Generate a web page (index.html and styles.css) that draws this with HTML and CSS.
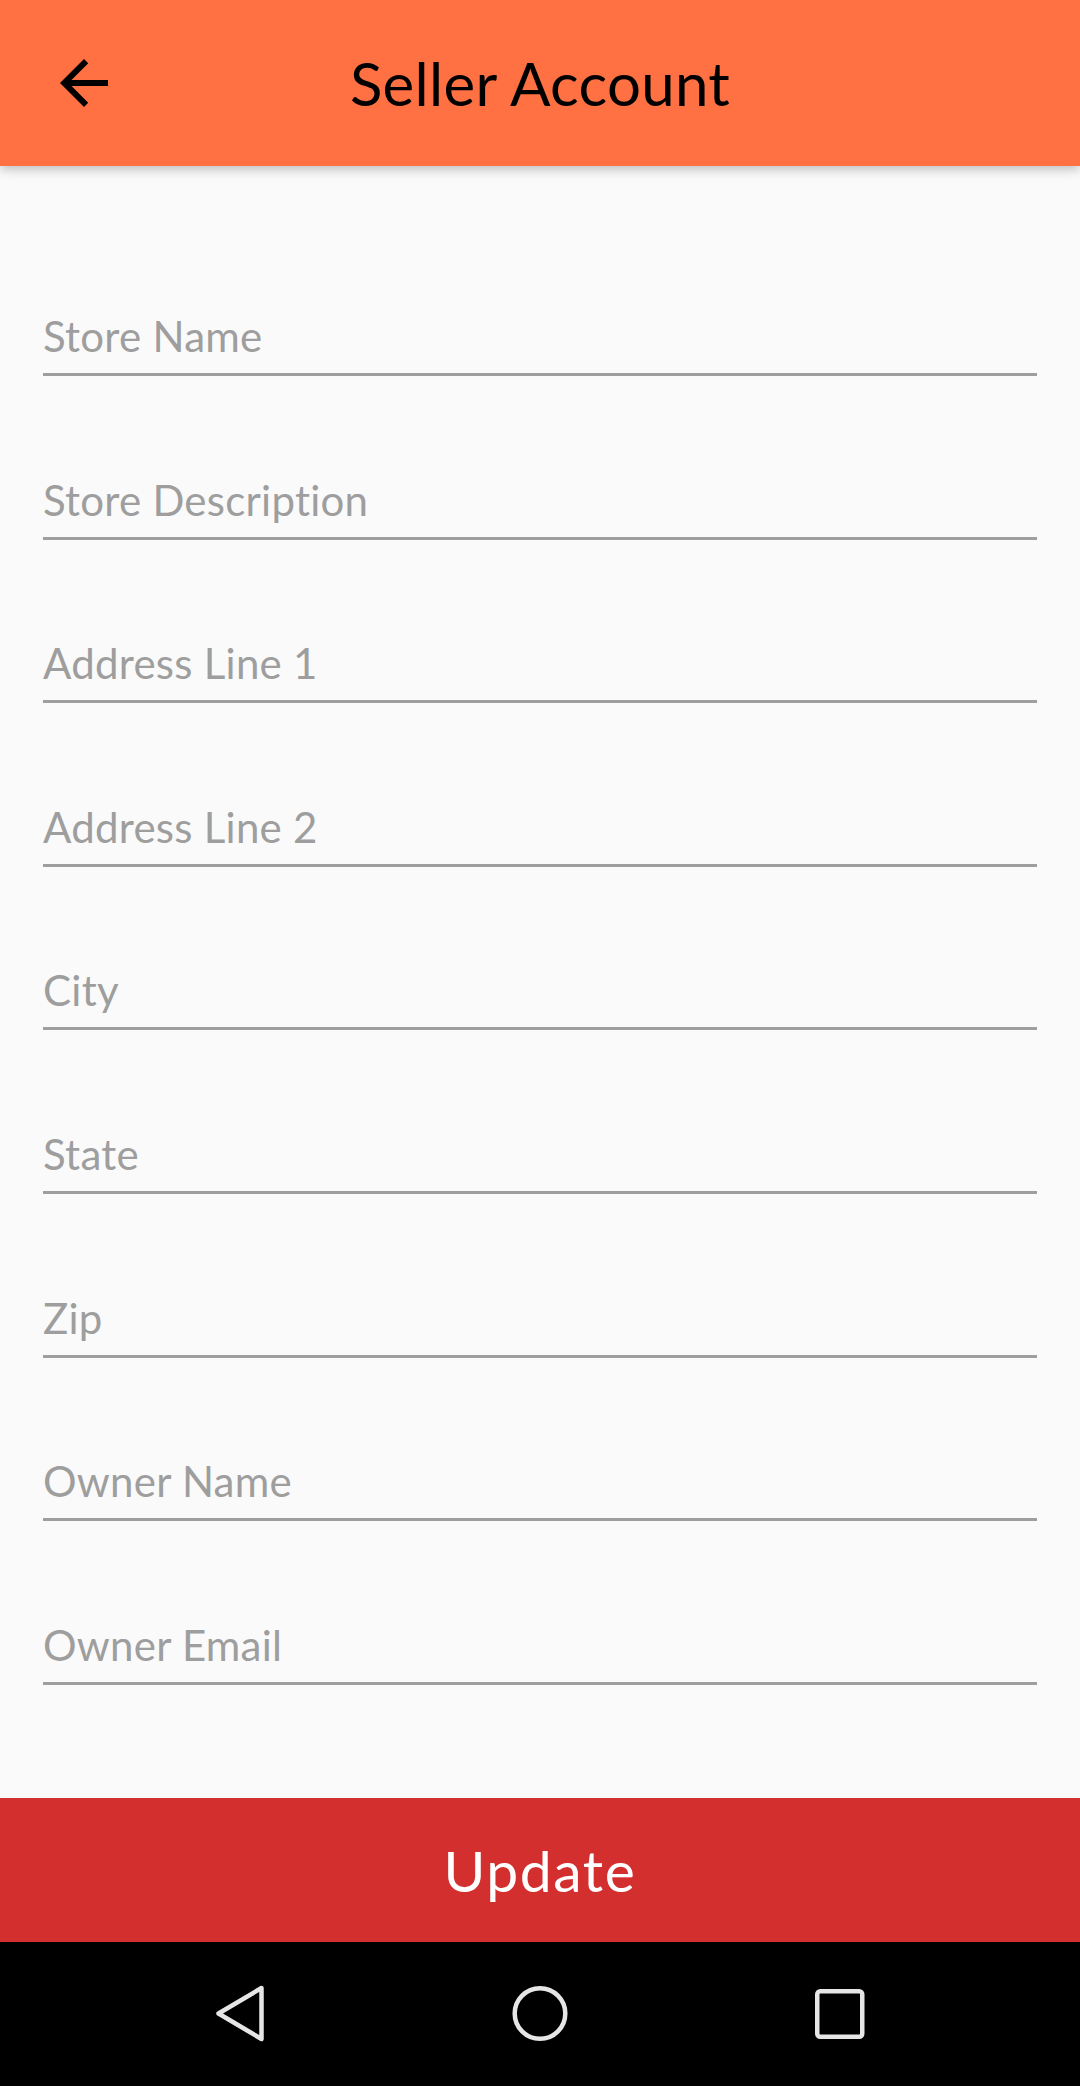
FILE: index.html
```html
<!DOCTYPE html>
<html lang="en">
<head>
<meta charset="utf-8">
<title>Seller Account</title>
<link rel="stylesheet" href="styles.css">
</head>
<body>
<div class="screen">
  <header class="appbar">
    <div class="appbar-left">
      <svg class="back-icon" width="72" height="72" viewBox="0 0 24 24" aria-hidden="true">
        <path d="M20 11H7.83l5.59-5.59L12 4l-8 8 8 8 1.41-1.41L7.83 13H20v-2z" fill="#000"/>
      </svg>
    </div>
    <h1 class="appbar-title">Seller Account</h1>
    <div class="appbar-right"></div>
  </header>

  <main class="form">
    <div class="field"><span class="hint">Store Name</span></div>
    <div class="field"><span class="hint">Store Description</span></div>
    <div class="field"><span class="hint">Address Line 1</span></div>
    <div class="field"><span class="hint">Address Line 2</span></div>
    <div class="field"><span class="hint">City</span></div>
    <div class="field"><span class="hint">State</span></div>
    <div class="field"><span class="hint">Zip</span></div>
    <div class="field"><span class="hint">Owner Name</span></div>
    <div class="field"><span class="hint">Owner Email</span></div>
  </main>

  <button class="update-btn" type="button">Update</button>

  <nav class="navbar">
    <svg class="nav-icon" width="60" height="60" viewBox="0 0 60 60" aria-hidden="true">
      <path d="M51.5 4 L8.5 29.5 L51.5 55 Z" fill="none" stroke="#e6e6e6" stroke-width="4.5" stroke-linejoin="round"/>
    </svg>
    <svg class="nav-icon" width="60" height="60" viewBox="0 0 60 60" aria-hidden="true">
      <circle cx="30" cy="29.5" r="25.3" fill="none" stroke="#e6e6e6" stroke-width="4.5"/>
    </svg>
    <svg class="nav-icon" width="60" height="60" viewBox="0 0 60 60" aria-hidden="true">
      <rect x="7.25" y="7.25" width="45" height="45.5" rx="3" fill="none" stroke="#e6e6e6" stroke-width="4.5"/>
    </svg>
  </nav>
</div>
</body>
</html>
```

FILE: styles.css
```css
* {
  box-sizing: border-box;
}

html, body {
  margin: 0;
  padding: 0;
}

body {
  background: #fafafa;
  font-family: "Lato", "Liberation Sans", sans-serif;
  font-variant-ligatures: no-common-ligatures;
}

.screen {
  width: 1080px;
  height: 2086px;
  display: flex;
  flex-direction: column;
  overflow: hidden;
}

.appbar {
  height: 166px;
  flex: 0 0 166px;
  background: #ff7043;
  display: grid;
  grid-template-columns: 1fr auto 1fr;
  align-items: center;
  box-shadow: 0 4px 10px rgba(0, 0, 0, 0.22);
  position: relative;
  z-index: 2;
}

.appbar-left {
  display: flex;
  align-items: center;
  padding-left: 48px;
}

.back-icon {
  display: block;
}

.appbar-title {
  margin: 0;
  font-size: 60px;
  line-height: 60px;
  font-weight: 400;
  letter-spacing: 0.3px;
  color: #000;
}

.form {
  flex: 1 1 auto;
  padding: 46.4px 43px 0 43px;
  display: flex;
  flex-direction: column;
}

.field {
  height: 163.6px;
  flex: 0 0 163.6px;
  display: flex;
  align-items: flex-end;
  border-bottom: 3px solid #9e9e9e;
  padding-bottom: 16px;
  padding-left: 0;
}

.hint {
  font-size: 42px;
  line-height: 42px;
  letter-spacing: 0.25px;
  color: #9e9e9e;
}

.update-btn {
  flex: 0 0 144px;
  height: 144px;
  border: 0;
  margin: 0;
  padding: 0;
  background: #d32f2f;
  color: #fff;
  font-family: "Lato", "Liberation Sans", sans-serif;
  font-variant-ligatures: no-common-ligatures;
  font-size: 57px;
  line-height: 57px;
  letter-spacing: 1.6px;
  font-weight: 400;
}

.navbar {
  flex: 0 0 144px;
  height: 144px;
  background: #000;
  display: grid;
  grid-template-columns: 300px 300px 300px;
  justify-content: center;
  align-items: center;
  justify-items: center;
}

.nav-icon {
  display: block;
}
```
